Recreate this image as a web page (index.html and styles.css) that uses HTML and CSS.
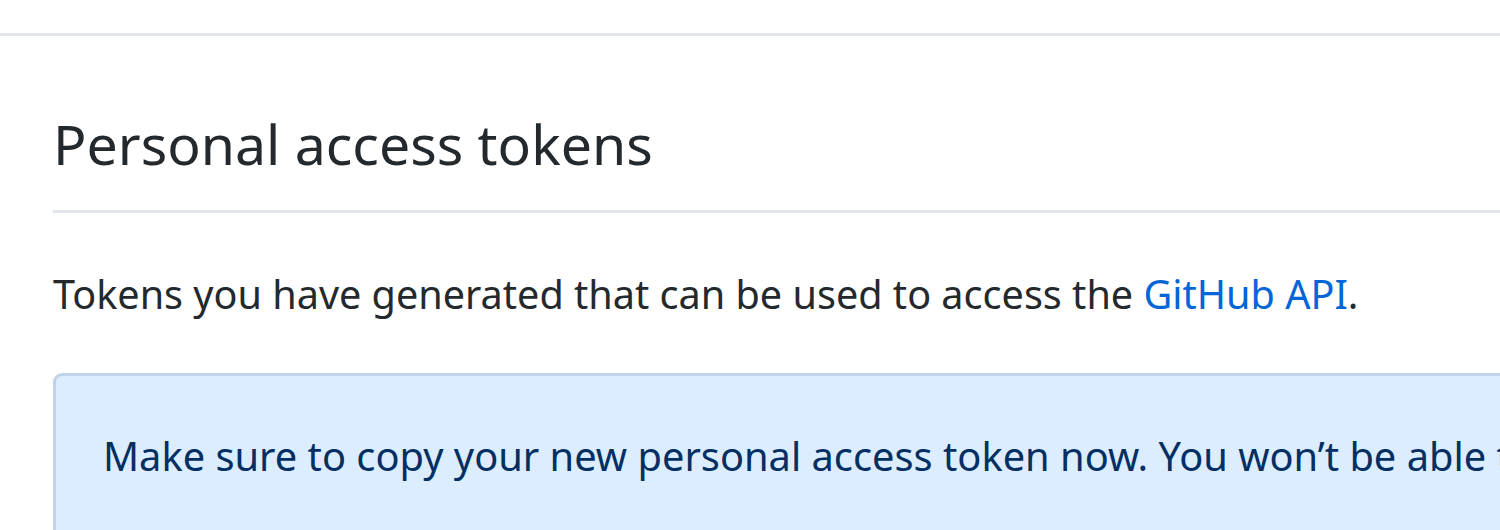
FILE: index.html
```html
<!DOCTYPE html>
<html lang="en">
<head>
<meta charset="utf-8">
<title>Personal access tokens</title>
<link rel="stylesheet" href="styles.css">
</head>
<body>
<div class="topbar"></div>
<main class="content">
  <div class="subhead">
    <h2 class="subhead-heading">Personal access tokens</h2>
  </div>
  <p class="lead">Tokens you have generated that can be used to access the <a href="#" class="link">GitHub API</a>.</p>
  <div class="flash"><span class="flash-text">Make sure to copy your new personal access token now. You won’t be able to see it again!</span></div>
</main>
</body>
</html>
```
FILE: styles.css
```css
html, body {
  margin: 0;
  padding: 0;
  background: #ffffff;
  overflow: hidden;
}
body {
  font-family: "Noto Sans", "Open Sans", sans-serif;
  color: #24292e;
  width: 1500px;
  height: 530px;
}
.topbar {
  height: 33px;
  border-bottom: 3px solid #e1e4e8;
}
.content {
  padding-left: 53px;
}
.subhead {
  margin-top: 63px;
  padding-bottom: 21px;
  border-bottom: 3px solid #e1e4e8;
}
.subhead-heading {
  margin: 0;
  font-size: 55.4px;
  font-weight: 400;
  line-height: 90px;
  white-space: nowrap;
}
.lead {
  margin: 55px 0 0;
  font-size: 39.6px;
  line-height: 52px;
  white-space: nowrap;
}
.link {
  color: #0366d6;
  text-decoration: none;
}
.flash {
  margin-top: 53px;
  padding: 54px 0 80px 47px;
  background: #dbedff;
  border: 3px solid #c0d3eb;
  border-right: 0;
  border-radius: 9px 0 0 0;
  color: #032f62;
  font-size: 39.8px;
  line-height: 52px;
  overflow: hidden;
}
.flash-text {
  display: block;
  white-space: nowrap;
}
```
